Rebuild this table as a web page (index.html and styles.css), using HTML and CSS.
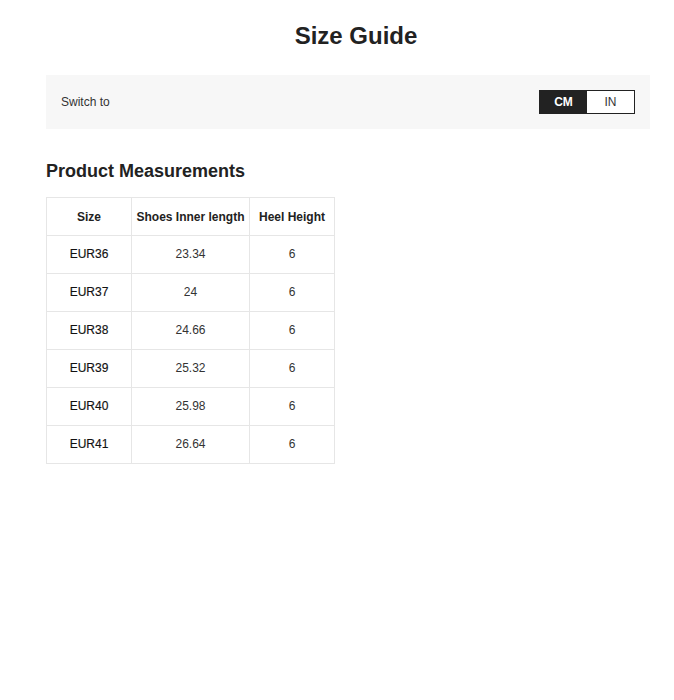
FILE: index.html
```html
<!DOCTYPE html>
<html>
<head>
<meta charset="utf-8">
<link rel="stylesheet" href="styles.css">
</head>
<body>
<div class="page">
  <h1 class="title">Size Guide</h1>
  <div class="switch-bar">
    <span class="switch-label">Switch to</span>
    <div class="toggle">
      <span class="opt active">CM</span>
      <span class="opt">IN</span>
    </div>
  </div>
  <h2 class="section-title">Product Measurements</h2>
  <table class="size-table">
    <thead>
      <tr><th class="c1">Size</th><th class="c2">Shoes Inner length</th><th class="c3">Heel Height</th></tr>
    </thead>
    <tbody>
      <tr><td class="size">EUR36</td><td>23.34</td><td>6</td></tr>
      <tr><td class="size">EUR37</td><td>24</td><td>6</td></tr>
      <tr><td class="size">EUR38</td><td>24.66</td><td>6</td></tr>
      <tr><td class="size">EUR39</td><td>25.32</td><td>6</td></tr>
      <tr><td class="size">EUR40</td><td>25.98</td><td>6</td></tr>
      <tr><td class="size">EUR41</td><td>26.64</td><td>6</td></tr>
    </tbody>
  </table>
</div>
</body>
</html>
```
FILE: styles.css
```css
html, body {
  margin: 0;
  padding: 0;
  background: #fff;
}
body {
  font-family: "Liberation Sans", Arial, sans-serif;
  color: #222;
}
.page {
  padding: 0 24px 0 46px;
}
.title {
  margin: 0;
  padding: 22px 0 0 16px;
  height: 75px;
  box-sizing: border-box;
  line-height: 28px;
  font-size: 24px;
  font-weight: 700;
  text-align: center;
  color: #222;
}
.switch-bar {
  background: #f7f7f7;
  height: 54px;
  display: flex;
  align-items: center;
  justify-content: space-between;
  padding: 0 15px;
  box-sizing: border-box;
}
.switch-label {
  font-size: 12px;
  color: #333;
}
.toggle {
  display: flex;
  border: 1px solid #222;
  height: 24px;
  box-sizing: border-box;
}
.opt {
  width: 47px;
  display: flex;
  align-items: center;
  justify-content: center;
  font-size: 12px;
  color: #333;
  background: #fff;
}
.opt.active {
  background: #222;
  color: #fff;
  font-weight: 700;
}
.section-title {
  margin: 0;
  padding-top: 31px;
  line-height: 22px;
  font-size: 18px;
  font-weight: 700;
  color: #222;
  height: 68px;
  box-sizing: border-box;
}
.size-table {
  border-collapse: collapse;
  font-size: 12px;
  color: #333;
}
.size-table th,
.size-table td {
  border: 1px solid #e6e6e6;
  height: 38px;
  padding: 0 0 1px;
  text-align: center;
  box-sizing: border-box;
}
.size-table th {
  font-weight: 700;
  color: #222;
  padding: 0;
}
.size-table .c1 { width: 85px; }
.size-table .c2 { width: 118px; }
.size-table .c3 { width: 85px; }
.size-table td.size {
  font-weight: 400;
  color: #111;
  -webkit-text-stroke: 0.15px #111;
}
```
